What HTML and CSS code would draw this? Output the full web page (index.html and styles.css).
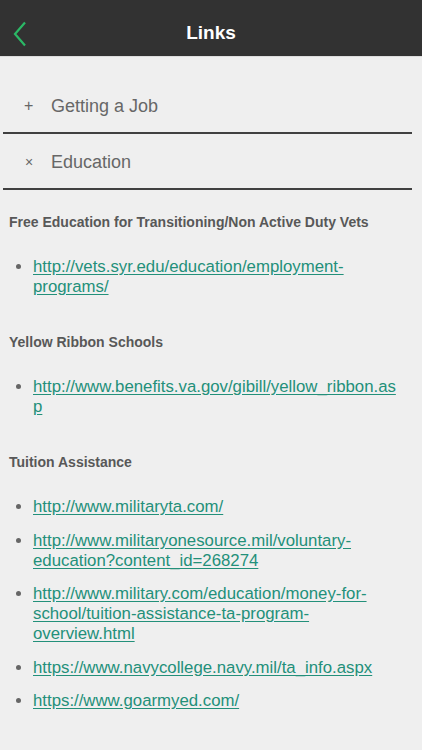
FILE: index.html
```html
<!DOCTYPE html>
<html>
<head>
<meta charset="utf-8">
<link rel="stylesheet" href="styles.css">
</head>
<body>
<header class="bar">
  <svg class="back" width="14" height="26" viewBox="0 0 14 26"><path d="M12 1.5 L2 13 L12 24.5" fill="none" stroke="#2bb866" stroke-width="2.2"/></svg>
  <h1 class="title">Links</h1>
</header>
<main class="page">
  <div class="acc">
    <div class="acc-row"><span class="sign">+</span><span class="acc-label">Getting a Job</span></div>
    <div class="acc-row"><span class="sign times">×</span><span class="acc-label">Education</span></div>
  </div>
  <section class="content">
    <h2 class="heading">Free Education for Transitioning/Non Active Duty Vets</h2>
    <ul class="links">
      <li><a href="#">http://vets.syr.edu/education/employment-programs/</a></li>
    </ul>
    <h2 class="heading">Yellow Ribbon Schools</h2>
    <ul class="links">
      <li><a href="#" class="brk">http://www.benefits.va.gov/gibill/yellow_ribbon.asp</a></li>
    </ul>
    <h2 class="heading">Tuition Assistance</h2>
    <ul class="links">
      <li><a href="#">http://www.militaryta.com/</a></li>
      <li><a href="#">http://www.militaryonesource.mil/voluntary-education?content_id=268274</a></li>
      <li><a href="#">http://www.military.com/education/money-for-school/tuition-assistance-ta-program-overview.html</a></li>
      <li><a href="#">https://www.navycollege.navy.mil/ta_info.aspx</a></li>
      <li><a href="#">https://www.goarmyed.com/</a></li>
    </ul>
  </section>
</main>
</body>
</html>
```
FILE: styles.css
```css
* { box-sizing: border-box; }
html, body { margin: 0; padding: 0; }
body {
  background: #efefef;
  font-family: "Liberation Sans", Arial, sans-serif;
  width: 422px;
  height: 750px;
  overflow: hidden;
}
.bar {
  height: 57px;
  background: #323232;
  border-bottom: 1px solid #dcdcdc;
  display: flex;
  align-items: center;
  justify-content: center;
  position: relative;
}
.back {
  position: absolute;
  left: 13px;
  top: 21px;
}
.title {
  margin: 0;
  color: #fff;
  font-size: 19px;
  font-weight: bold;
  padding-top: 9px;
}
.page { padding: 0 10px 0 3px; }
.acc { padding-top: 21px; }
.acc-row {
  height: 56px;
  border-bottom: 2px solid #404040;
  display: flex;
  align-items: center;
  padding-top: 2px;
  color: #676767;
}
.sign {
  width: 48px;
  padding-left: 21px;
  font-size: 16px;
}
.sign.times { font-size: 14px; padding-left: 22px; }
.acc-label { font-size: 18px; }
.content { padding: 24px 10px 0 6px; }
.heading {
  margin: 0;
  font-size: 14px;
  font-weight: bold;
  color: #585858;
}
.links {
  margin: 27px 0 37px;
  padding-left: 24px;
  color: #666;
}
.links li {
  font-size: 16.8px;
  line-height: 20px;
  margin-bottom: 13.5px;
}
.links a {
  color: #23907a;
  text-decoration: underline;
  text-underline-offset: 2px;
}
.brk { word-break: break-all; }
```
